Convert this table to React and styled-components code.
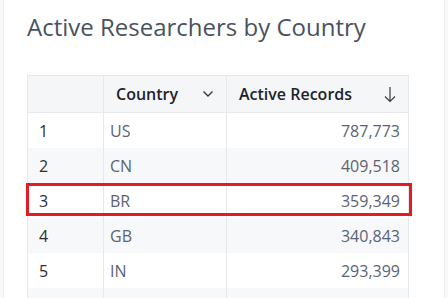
import React from 'react';
import styled, { createGlobalStyle } from 'styled-components';

const GlobalStyle = createGlobalStyle`
  html, body {
    margin: 0;
    padding: 0;
    background: #f7f8fa;
    font-family: 'Open Sans', 'Noto Sans', sans-serif;
  }
`;

const rows = [
  { rank: 1, country: 'US', count: 787773 },
  { rank: 2, country: 'CN', count: 409518 },
  { rank: 3, country: 'BR', count: 359349, highlight: true },
  { rank: 4, country: 'GB', count: 340843 },
  { rank: 5, country: 'IN', count: 293399 },
  { rank: 6, country: '', count: null }
];

const ChevronDown = () => (
  <svg width="12" height="8" viewBox="0 0 12 8" fill="none">
    <path d="M1.5 1.5 L6 6 L10.5 1.5" stroke="#333" strokeWidth="1.3" />
  </svg>
);

const ArrowDown = () => (
  <svg width="12" height="17" viewBox="0 0 12 17" fill="none">
    <path d="M6 1 V15.5 M1 10.5 L6 15.5 L11 10.5" stroke="#3a3d42" strokeWidth="1.2" />
  </svg>
);

const App = () => (
  <>
    <GlobalStyle />
    <Page>
      <Card>
        <Title>Active Researchers by Country</Title>
        <Table>
          <HeaderRow>
            <HeadCell />
            <HeadCell>
              <span>Country</span>
              <ChevronDown />
            </HeadCell>
            <HeadCell>
              <span>Active Records</span>
              <ArrowDown />
            </HeadCell>
          </HeaderRow>
          {rows.map((row, i) => (
            <Row key={row.rank} striped={i % 2 === 1} highlight={row.highlight}>
              <Cell pad={11}>{row.count !== null ? row.rank : ''}</Cell>
              <Cell pad={6} muted>{row.country}</Cell>
              <Cell pad={6} muted right>
                {row.count !== null ? row.count.toLocaleString('en-US') : ''}
              </Cell>
            </Row>
          ))}
        </Table>
      </Card>
    </Page>
  </>
);

export default App;

const Page = styled.div`
  width: 448px;
  height: 298px;
  overflow: hidden;
  padding-left: 3px;
  box-sizing: border-box;
`;

const Card = styled.div`
  width: 442px;
  height: 298px;
  background: #ffffff;
  border-left: 1px solid #eceef1;
  border-right: 1px solid #eceef1;
  box-sizing: border-box;
  padding: 10px 0 0 23px;
`;

const Title = styled.h1`
  margin: 0;
  font-size: 24px;
  font-weight: 400;
  line-height: 34px;
  color: #4a5260;
`;

const Table = styled.div`
  margin-top: 31px;
  width: 380px;
  border-left: 1px solid #e6e8eb;
  border-right: 1px solid #e6e8eb;
  border-top: 1px solid #e6e8eb;
`;

const HeaderRow = styled.div`
  display: grid;
  grid-template-columns: 75px 123px 1fr;
  height: 36px;
  background: #f5f6f8;
  border-bottom: 1px solid #e6e8eb;
`;

const HeadCell = styled.div`
  display: flex;
  align-items: center;
  justify-content: space-between;
  padding: 0 12px 0 12px;
  font-size: 16px;
  font-weight: 600;
  color: #1f2329;
  border-left: 1px solid #e6e8eb;

  &:first-child {
    border-left: none;
  }
`;

const Row = styled.div`
  position: relative;
  display: grid;
  grid-template-columns: 75px 123px 1fr;
  height: 35px;
  background: ${p => (p.striped ? '#f7f8fa' : '#ffffff')};

  &::after {
    content: '';
    display: ${p => (p.highlight ? 'block' : 'none')};
    position: absolute;
    left: -2px;
    right: -4px;
    top: 0;
    bottom: 2px;
    border: 3px solid #e21b24;
    pointer-events: none;
  }
`;

const Cell = styled.div`
  display: flex;
  align-items: center;
  justify-content: ${p => (p.right ? 'flex-end' : 'flex-start')};
  padding: 0 8px 0 ${p => p.pad}px;
  font-size: 16px;
  color: ${p => (p.muted ? '#5b6372' : '#2b2f36')};
  border-left: 1px solid #e6e8eb;

  &:first-child {
    border-left: none;
  }
`;
